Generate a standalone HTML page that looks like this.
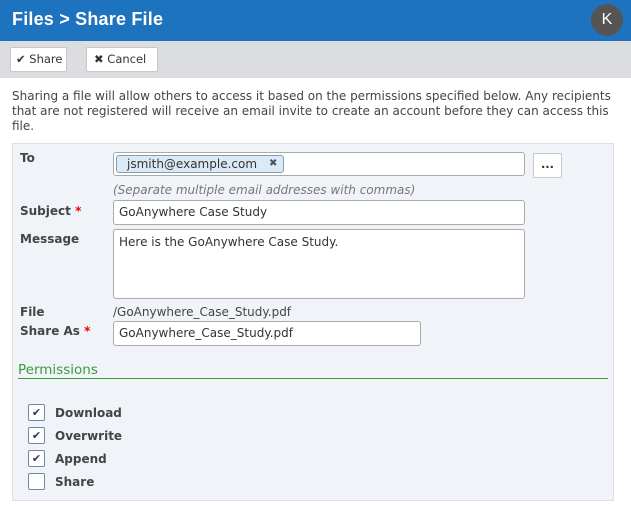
<!DOCTYPE html><html><head><style>
*{margin:0;padding:0;box-sizing:border-box}
body{width:631px;height:509px;background:#fff;font-family:"DejaVu Sans","Liberation Sans",sans-serif;font-size:12px;color:#444;position:relative;overflow:hidden}
.a{position:absolute}
.hdr{left:0;top:0;width:631px;height:41px;background:#1e73be}
.ttl{left:12px;top:9px;color:#fff;font-size:18px;font-weight:bold;font-family:"Liberation Sans",sans-serif;letter-spacing:.2px}
.av{left:591px;top:4px;width:32px;height:32px;border-radius:50%;background:#555;color:#fff;font-size:16px;text-align:center;line-height:32px;font-family:"Liberation Sans",sans-serif}
.tb{left:0;top:41px;width:631px;height:37px;background:#dcdde0}
.btn{background:#fff;border:1px solid #c8c8c8;border-radius:2px;height:25px;line-height:23px;font-size:11.5px;color:#333;white-space:nowrap}
.inp{background:#fff;border:1px solid #aaa;border-radius:3px;font-size:12px;padding:0 5px;color:#333}
.lbl{left:20px;font-weight:bold;font-size:12px;color:#444}
.req{color:#e00}
.cb{left:28px;width:17px;height:17px;border:1px solid #6b8aa8;border-radius:2px;background:#fff}
.cl{left:55px;font-weight:bold;font-size:12px;color:#444}
</style></head><body>
<div class="a hdr"></div>
<div class="a ttl">Files &gt; Share File</div>
<div class="a av">K</div>
<div class="a tb"></div>
<div class="a btn" style="left:10px;top:47px;width:57px;padding-left:5px">✔&nbsp;Share</div>
<div class="a btn" style="left:86px;top:47px;width:72px;padding-left:7px"><b>✖</b>&nbsp;Cancel</div>
<div class="a" style="left:12px;top:89px;width:610px;line-height:15px;font-size:12px">Sharing a file will allow others to access it based on the permissions specified below. Any recipients that are not registered will receive an email invite to create an account before they can access this file.</div>
<div class="a" style="left:12px;top:143px;width:602px;height:358px;background:#f0f4f9;border:1px solid #dcdfe3"></div>
<div class="a lbl" style="top:151px">To</div>
<div class="a inp" style="left:113px;top:152px;width:412px;height:24px"></div>
<div class="a" style="left:116px;top:155px;width:168px;height:18px;background:#dce9f7;border:1px solid #8a9bb0;border-radius:3px;font-size:12px;line-height:16px;padding-left:10px;color:#333">jsmith@example.com<span style="position:absolute;left:152px;font-size:10px;color:#456">✖</span></div>
<div class="a btn" style="left:533px;top:153px;width:29px;height:25px;text-align:center;font-weight:bold;line-height:20px">...</div>
<div class="a" style="left:113px;top:183px;font-style:italic;color:#777;font-size:12px">(Separate multiple email addresses with commas)</div>
<div class="a lbl" style="top:204px">Subject <span class="req">*</span></div>
<div class="a inp" style="left:113px;top:200px;width:412px;height:25px;line-height:23px">GoAnywhere Case Study</div>
<div class="a lbl" style="top:232px">Message</div>
<div class="a inp" style="left:113px;top:229px;width:412px;height:70px;padding-top:5px">Here is the GoAnywhere Case Study.</div>
<div class="a lbl" style="top:305px">File</div>
<div class="a" style="left:113px;top:305px;color:#444">/GoAnywhere_Case_Study.pdf</div>
<div class="a lbl" style="top:324px">Share As <span class="req">*</span></div>
<div class="a inp" style="left:113px;top:321px;width:308px;height:25px;line-height:23px">GoAnywhere_Case_Study.pdf</div>
<div class="a" style="left:18px;top:362px;color:#3a9a3a;font-size:13.5px">Permissions</div>
<div class="a" style="left:18px;top:378px;width:590px;height:1px;background:#3a9a3a"></div>
<div class="a cb" style="top:404px;text-align:center;font-size:11px;line-height:15px;color:#335">✔</div><div class="a cl" style="top:406px">Download</div>
<div class="a cb" style="top:427px;text-align:center;font-size:11px;line-height:15px;color:#335">✔</div><div class="a cl" style="top:429px">Overwrite</div>
<div class="a cb" style="top:450px;text-align:center;font-size:11px;line-height:15px;color:#335">✔</div><div class="a cl" style="top:452px">Append</div>
<div class="a cb" style="top:473px"></div><div class="a cl" style="top:475px">Share</div>
</body></html>
